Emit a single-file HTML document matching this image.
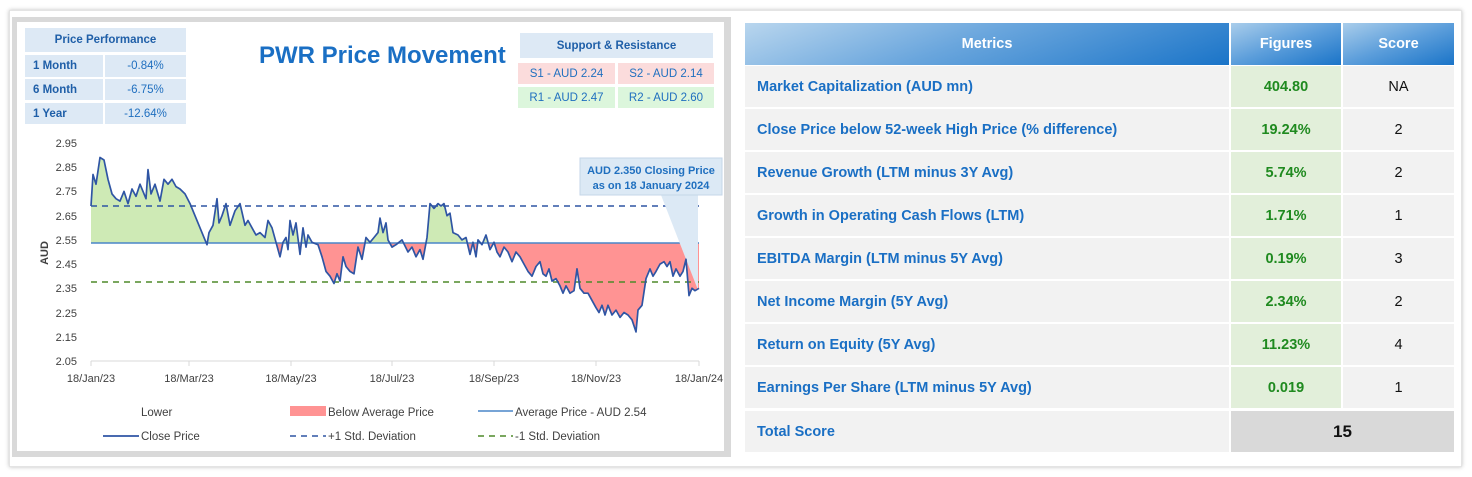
<!DOCTYPE html>
<html><head><meta charset="utf-8"><style>
*{margin:0;padding:0;box-sizing:border-box}
body{width:1472px;height:477px;background:#fff;font-family:"Liberation Sans",sans-serif;position:relative;overflow:hidden}
.abs{position:absolute}
.frame{left:9px;top:10px;width:1453px;height:457px;border:1px solid #e4e4e4;box-shadow:0 0 4px rgba(0,0,0,.25);background:#fff}
.lp{left:12px;top:17px;width:719px;height:440px;background:#d9d9d9}
.li{left:17px;top:22px;width:707px;height:429px;background:#fff}
.c{display:flex;align-items:center;justify-content:center;font-size:11.5px;color:#1f6fbf}
.pp{background:#dde9f5}
.b{font-weight:bold}
.tbl div.cell{position:absolute;display:flex;align-items:center;font-size:14.5px}
</style></head><body>
<div class="abs frame"></div>
<div class="abs lp"></div>
<div class="abs li"></div>

<div class="abs c pp b" style="left:25px;top:28px;width:161px;height:24px;color:#1f5fa8">Price Performance</div>
<div class="abs c pp b" style="left:25px;top:55px;width:78px;height:22px;justify-content:flex-start;padding-left:8px;color:#1f5fa8">1 Month</div>
<div class="abs c pp" style="left:105px;top:55px;width:81px;height:22px">-0.84%</div>
<div class="abs c pp b" style="left:25px;top:79px;width:78px;height:21px;justify-content:flex-start;padding-left:8px;color:#1f5fa8">6 Month</div>
<div class="abs c pp" style="left:105px;top:79px;width:81px;height:21px">-6.75%</div>
<div class="abs c pp b" style="left:25px;top:103px;width:78px;height:21px;justify-content:flex-start;padding-left:8px;color:#1f5fa8">1 Year</div>
<div class="abs c pp" style="left:105px;top:103px;width:81px;height:21px">-12.64%</div>

<div class="abs" style="left:259px;top:42px;font-size:24px;font-weight:bold;color:#1a6fc4">PWR Price Movement</div>

<div class="abs c pp b" style="left:520px;top:33px;width:193px;height:25px;color:#1f5fa8">Support &amp; Resistance</div>
<div class="abs c" style="left:518px;top:63px;width:97px;height:21px;background:#fbdcdc">S1 - AUD 2.24</div>
<div class="abs c" style="left:618px;top:63px;width:96px;height:21px;background:#fbdcdc">S2 - AUD 2.14</div>
<div class="abs c" style="left:518px;top:87px;width:97px;height:21px;background:#dcf6dc">R1 - AUD 2.47</div>
<div class="abs c" style="left:618px;top:87px;width:96px;height:21px;background:#dcf6dc">R2 - AUD 2.60</div>

<svg class="abs" style="left:0;top:0" width="740" height="477" id="ch">
<defs>
<clipPath id="up"><rect x="0" y="0" width="740" height="243"/></clipPath>
<clipPath id="dn"><rect x="0" y="243" width="740" height="200"/></clipPath>
</defs>
<g font-size="11" fill="#404040" text-anchor="end" font-family="Liberation Sans, sans-serif">
<text x="77" y="147">2.95</text><text x="77" y="171">2.85</text><text x="77" y="195">2.75</text><text x="77" y="220">2.65</text><text x="77" y="244">2.55</text><text x="77" y="268">2.45</text><text x="77" y="292">2.35</text><text x="77" y="317">2.25</text><text x="77" y="341">2.15</text><text x="77" y="365">2.05</text>
</g>
<text transform="translate(48,253) rotate(-90)" font-size="11" font-weight="bold" fill="#404040" text-anchor="middle">AUD</text>
<g font-size="11" fill="#404040" text-anchor="middle">
<text x="91" y="382">18/Jan/23</text><text x="189" y="382">18/Mar/23</text><text x="291" y="382">18/May/23</text><text x="392" y="382">18/Jul/23</text><text x="494" y="382">18/Sep/23</text><text x="596" y="382">18/Nov/23</text><text x="699" y="382">18/Jan/24</text>
</g>
<line x1="91" y1="361" x2="699" y2="361" stroke="#d9d9d9"/>
<g stroke="#d9d9d9"><line x1="91" y1="361" x2="91" y2="366"/><line x1="189" y1="361" x2="189" y2="366"/><line x1="291" y1="361" x2="291" y2="366"/><line x1="392" y1="361" x2="392" y2="366"/><line x1="494" y1="361" x2="494" y2="366"/><line x1="596" y1="361" x2="596" y2="366"/><line x1="699" y1="361" x2="699" y2="366"/></g>
<path id="fg" clip-path="url(#up)" fill="#c6e6a8" opacity=".85"/>
<path id="fr" clip-path="url(#dn)" fill="#ff9393"/>
<line x1="91" y1="243" x2="699" y2="243" stroke="#4a86c8" stroke-width="1.5"/>
<line x1="91" y1="206" x2="699" y2="206" stroke="#2f55a4" stroke-width="1.6" stroke-dasharray="6,5"/>
<line x1="91" y1="282" x2="699" y2="282" stroke="#4e8a2a" stroke-width="1.4" stroke-dasharray="6,5"/>
<polygon points="661,195 698,195 698,290" fill="#dce9f5"/>
<polyline id="pl" fill="none" stroke="#2f55a4" stroke-width="1.7" stroke-linejoin="round"/>
<rect x="580" y="158" width="142" height="37" fill="#dce9f5" stroke="#c5d6e8"/>
<text x="651" y="174" font-size="11" font-weight="bold" fill="#1f6fbf" text-anchor="middle">AUD 2.350 Closing Price</text>
<text x="651" y="189" font-size="11" font-weight="bold" fill="#1f6fbf" text-anchor="middle">as on 18 January 2024</text>
<g font-size="11.5" fill="#404040">
<text x="141" y="416">Lower</text>
<rect x="290" y="406" width="36" height="10" fill="#ff9393"/><text x="328" y="416">Below Average Price</text>
<line x1="478" y1="411" x2="513" y2="411" stroke="#4a86c8" stroke-width="1.5"/><text x="515" y="416">Average Price - AUD 2.54</text>
<line x1="103" y1="436" x2="139" y2="436" stroke="#2f55a4" stroke-width="1.7"/><text x="141" y="440">Close Price</text>
<line x1="290" y1="436" x2="326" y2="436" stroke="#2f55a4" stroke-width="1.6" stroke-dasharray="6,5"/><text x="328" y="440">+1 Std. Deviation</text>
<line x1="478" y1="436" x2="513" y2="436" stroke="#4e8a2a" stroke-width="1.4" stroke-dasharray="6,5"/><text x="515" y="440">-1 Std. Deviation</text>
</g>
</svg>

<div class="tbl">
<div class="cell" style="left:745px;top:23px;width:484px;height:42px;justify-content:center;color:#fff;font-weight:bold;background:linear-gradient(160deg,#b9d6ee 0%,#6aa6dd 45%,#1a74c8 100%)">Metrics</div>
<div class="cell" style="left:1231px;top:23px;width:110px;height:42px;justify-content:center;color:#fff;font-weight:bold;background:linear-gradient(160deg,#a9cdeb 0%,#5c9edb 50%,#1a74c8 100%)">Figures</div>
<div class="cell" style="left:1343px;top:23px;width:111px;height:42px;justify-content:center;color:#fff;font-weight:bold;background:linear-gradient(160deg,#a9cdeb 0%,#5c9edb 50%,#1a74c8 100%)">Score</div>
</div>
<div id="rows"></div>

<script>
var pts=[[91,2.69],[93,2.82],[96,2.78],[100,2.89],[104,2.88],[108,2.80],[112,2.74],[116,2.72],[120,2.71],[124,2.75],[128,2.70],[132,2.76],[136,2.73],[140,2.78],[146,2.72],[148,2.84],[151,2.74],[155,2.78],[160,2.71],[164,2.80],[168,2.78],[172,2.80],[176,2.77],[180,2.76],[185,2.74],[190,2.70],[195,2.65],[200,2.60],[205,2.55],[207,2.53],[209,2.58],[213,2.61],[217,2.72],[219,2.62],[222,2.65],[226,2.70],[230,2.61],[235,2.67],[240,2.70],[245,2.61],[248,2.63],[252,2.60],[256,2.57],[260,2.58],[265,2.56],[268,2.63],[272,2.60],[276,2.54],[280,2.48],[283,2.54],[286,2.56],[288,2.51],[290,2.63],[293,2.57],[296,2.62],[300,2.49],[303,2.60],[306,2.52],[308,2.57],[312,2.54],[318,2.53],[322,2.48],[326,2.42],[330,2.40],[334,2.37],[337,2.41],[340,2.38],[343,2.48],[346,2.44],[350,2.42],[354,2.41],[358,2.52],[362,2.47],[366,2.56],[370,2.54],[374,2.56],[378,2.58],[380,2.64],[383,2.58],[386,2.62],[388,2.55],[392,2.52],[396,2.53],[402,2.55],[408,2.50],[412,2.52],[416,2.48],[420,2.51],[423,2.47],[427,2.56],[430,2.70],[434,2.68],[438,2.70],[441,2.69],[444,2.70],[447,2.65],[450,2.66],[453,2.58],[458,2.57],[462,2.55],[466,2.56],[470,2.49],[473,2.54],[476,2.48],[478,2.55],[482,2.53],[486,2.57],[490,2.51],[494,2.54],[497,2.50],[500,2.48],[504,2.52],[508,2.50],[512,2.46],[516,2.50],[520,2.48],[524,2.45],[528,2.42],[532,2.40],[536,2.44],[540,2.46],[543,2.41],[546,2.40],[549,2.43],[552,2.38],[556,2.39],[560,2.36],[563,2.33],[566,2.36],[570,2.33],[574,2.34],[577,2.43],[580,2.35],[584,2.33],[588,2.33],[592,2.30],[596,2.27],[599,2.25],[602,2.28],[605,2.24],[608,2.28],[612,2.24],[616,2.26],[620,2.23],[624,2.25],[628,2.24],[632,2.22],[636,2.17],[638,2.26],[642,2.28],[646,2.39],[650,2.43],[653,2.40],[656,2.42],[660,2.45],[664,2.46],[667,2.44],[670,2.46],[673,2.40],[676,2.43],[680,2.40],[683,2.42],[686,2.47],[689,2.32],[692,2.35],[695,2.34],[699,2.35]];
var s=pts.map(function(p){return p[0]+","+(143+(2.95-p[1])*242.2).toFixed(1)}).join(" ");
document.getElementById("pl").setAttribute("points",s);
var d="M91,243 L"+s.split(" ").join(" L")+" L699,243 Z";
document.getElementById("fg").setAttribute("d",d);
document.getElementById("fr").setAttribute("d",d);
var rows=[["Market Capitalization (AUD mn)","404.80","NA"],["Close Price below 52-week High Price (% difference)","19.24%","2"],["Revenue Growth (LTM minus 3Y Avg)","5.74%","2"],["Growth in Operating Cash Flows (LTM)","1.71%","1"],["EBITDA Margin (LTM minus 5Y Avg)","0.19%","3"],["Net Income Margin (5Y Avg)","2.34%","2"],["Return on Equity (5Y Avg)","11.23%","4"],["Earnings Per Share (LTM minus 5Y Avg)","0.019","1"]];
var h="";
rows.forEach(function(r,i){var t=66+i*43;
h+='<div class="abs" style="left:745px;top:'+t+'px;width:484px;height:41px;background:#f2f2f2;display:flex;align-items:center;padding-left:12px;font-size:14.5px;font-weight:bold;color:#1a6fc4">'+r[0]+'</div>';
h+='<div class="abs" style="left:1231px;top:'+t+'px;width:110px;height:41px;background:#e2efda;display:flex;align-items:center;justify-content:center;font-size:14.5px;font-weight:bold;color:#1f8a1f">'+r[1]+'</div>';
h+='<div class="abs" style="left:1343px;top:'+t+'px;width:111px;height:41px;background:#f2f2f2;display:flex;align-items:center;justify-content:center;font-size:14.5px;color:#111">'+r[2]+'</div>';});
h+='<div class="abs" style="left:745px;top:411px;width:484px;height:41px;background:#f2f2f2;display:flex;align-items:center;padding-left:12px;font-size:14.5px;font-weight:bold;color:#1a6fc4">Total Score</div>';
h+='<div class="abs" style="left:1231px;top:411px;width:223px;height:41px;background:#d9d9d9;display:flex;align-items:center;justify-content:center;font-size:17px;font-weight:bold;color:#111">15</div>';
document.getElementById("rows").innerHTML=h;
</script>
</body></html>
